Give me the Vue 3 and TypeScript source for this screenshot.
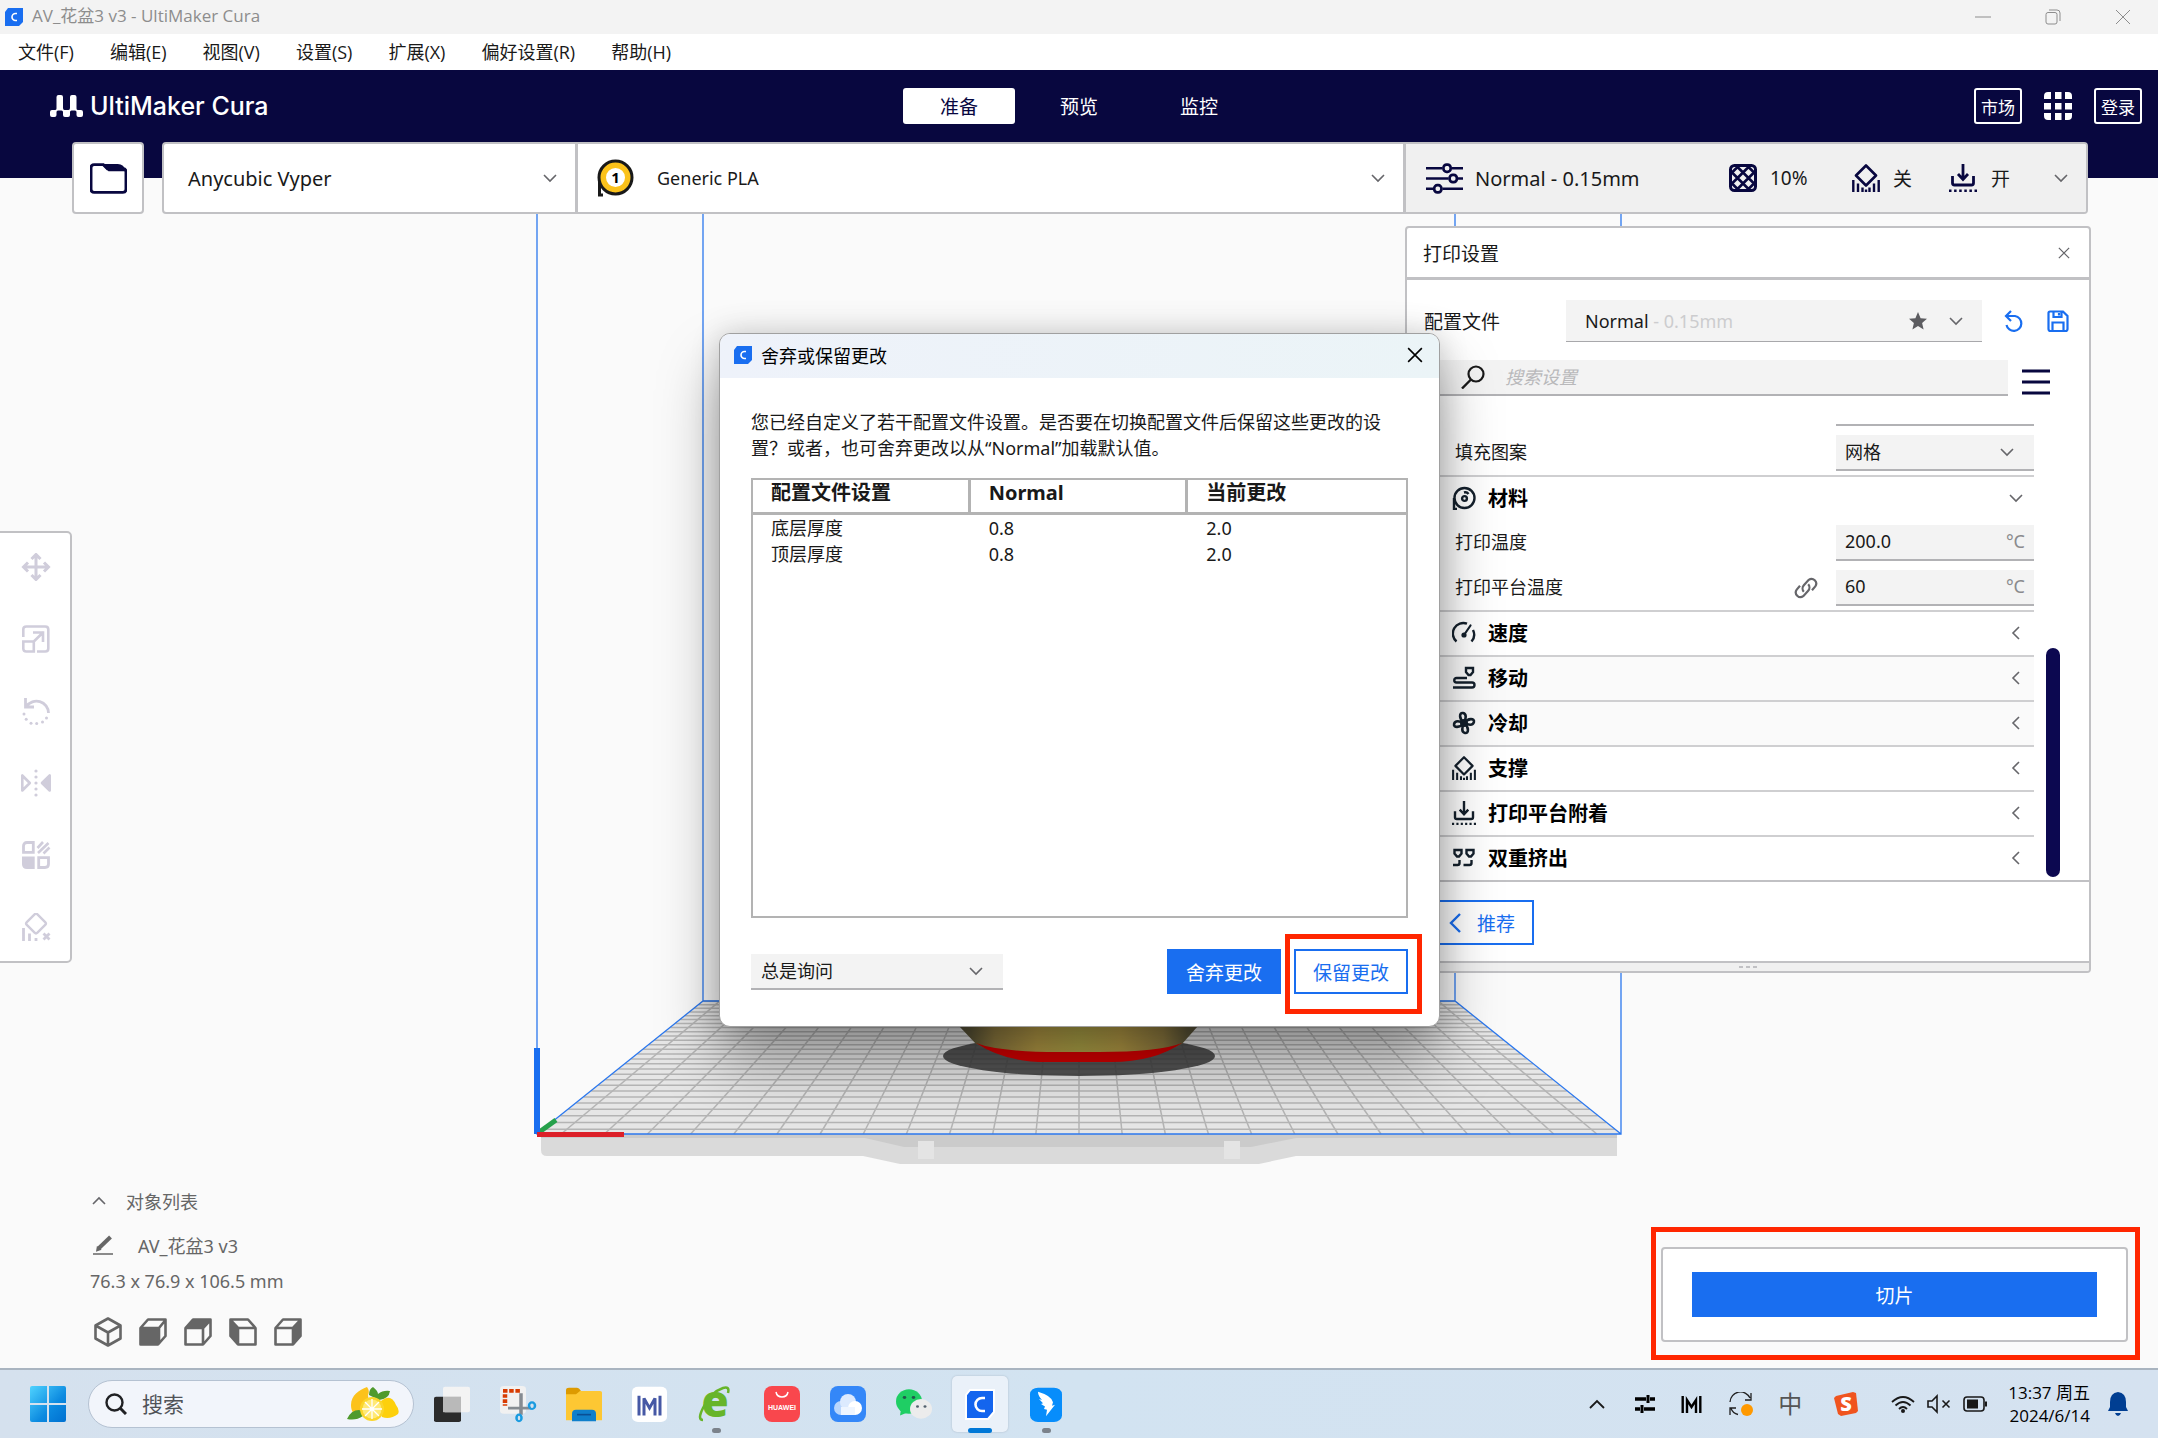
<script setup lang="ts">
import { ref } from 'vue'

interface Category { icon: string; name: string; open?: boolean; muted?: boolean }
interface Change { name: string; before: string; after: string }

const menus: string[] = ['文件(F)', '编辑(E)', '视图(V)', '设置(S)', '扩展(X)', '偏好设置(R)', '帮助(H)']
const stages: string[] = ['准备', '预览', '监控']
const activeStage = ref<string>('准备')
const tools: { icon: string; label: string }[] = [
  { icon: 'move', label: '移动' },
  { icon: 'scale', label: '缩放' },
  { icon: 'rotate', label: '旋转' },
  { icon: 'mirror', label: '镜像' },
  { icon: 'permodel', label: '单一模型设置' },
  { icon: 'blocker', label: '支撑拦截器' },
]
const views: string[] = ['view3d', 'viewfront', 'viewtop', 'viewleft', 'viewright']
const categories: Category[] = [
  { icon: 'speed', name: '速度' },
  { icon: 'travel', name: '移动', muted: true },
  { icon: 'fan', name: '冷却', muted: true },
  { icon: 'support', name: '支撑' },
  { icon: 'adhesion', name: '打印平台附着' },
  { icon: 'dual', name: '双重挤出' },
]
const changes: Change[] = [
  { name: '底层厚度', before: '0.8', after: '2.0' },
  { name: '顶层厚度', before: '0.8', after: '2.0' },
]
const search = ref<string>('')
const nozzleTemp = ref<string>('200.0')
const bedTemp = ref<string>('60')

/* Build plate in one-point perspective: the front edge is at y 1134, the horizon at y 700. */
const centre = 1080
const horizon = 700
const depthAt = (t: number): number => 1 / (1 + 0.4422 * t)
const yAt = (t: number): number => horizon + 434 * depthAt(t)
const depthLines = Array.from({ length: 25 }, (_, i) => {
  const dx = (i - 12) * 43.15
  return { x1: centre + dx, y1: yAt(0), x2: centre + dx * depthAt(1), y2: yAt(1) }
})
const crossLines = Array.from({ length: 27 }, (_, i) => {
  const t = 0.0245 + 0.0374 * i
  const half = 541.5 * depthAt(t)
  return { x1: centre - half, x2: centre + half, y: yAt(t) }
})
</script>

<template>
  <div class="desktop">
    <svg class="sprite" aria-hidden="true">
      <symbol id="cura" viewBox="0 0 18 18">
        <path d="M3 0h15v14l-4 4H0V4z" fill="#196ef0" />
        <path d="M12 5.500h-1.500a3.500 3.500 0 0 0 0 7H12" fill="none" stroke="#fff" stroke-width="1.600" />
      </symbol>
      <symbol id="down" viewBox="0 0 14 14"><path d="M1 4l6 6 6-6" fill="none" stroke="currentColor" stroke-width="1.600" /></symbol>
      <symbol id="left" viewBox="0 0 14 14"><path d="M10 1L4 7l6 6" fill="none" stroke="currentColor" stroke-width="1.600" /></symbol>
      <symbol id="close" viewBox="0 0 14 14"><path d="M1 1l12 12M13 1L1 13" fill="none" stroke="currentColor" stroke-width="1.400" /></symbol>
      <symbol id="support" viewBox="0 0 28 28">
        <path d="M14 1.500l10 10-10 10-10-10z" fill="none" stroke="currentColor" stroke-width="2.600" stroke-linejoin="round" />
        <path d="M1.300 16v12M6 19.500V28M10.500 23.500V28M14 25.500V28M17.500 23.500V28M22 19.500V28M26.700 16v12" stroke="currentColor" stroke-width="2.400" />
      </symbol>
      <symbol id="adhesion" viewBox="0 0 28 28">
        <path d="M14 0v15M9 10l5 5.500 5-5.500M3.500 12v7q0 2 2 2h17q2 0 2-2v-7" fill="none" stroke="currentColor" stroke-width="2.800" />
        <path d="M0 26.700h28" stroke="currentColor" stroke-width="2.500" stroke-dasharray="2.500 2.600" />
      </symbol>
      <symbol id="speed" viewBox="0 0 24 24">
        <path d="M4.500 20.500A10.500 10.500 0 0 1 15 2.700M19.500 20.500a10.500 10.500 0 0 0 1.500-11.500" fill="none" stroke="currentColor" stroke-width="2.400" />
        <path d="M12 14l6.500-9.500" stroke="currentColor" stroke-width="2.200" stroke-linecap="round" /><circle cx="12" cy="14" r="2.600" fill="currentColor" />
      </symbol>
      <symbol id="travel" viewBox="0 0 24 24">
        <path d="M14 2h7v4l-2.500 3h-2L14 6z" fill="none" stroke="currentColor" stroke-width="2.400" />
        <path d="M15 12H4.500a2.200 2.200 0 0 0 0 4.500H20a2.500 2.500 0 0 1 0 5H1" fill="none" stroke="currentColor" stroke-width="2.400" />
      </symbol>
      <symbol id="fan" viewBox="0 0 24 24">
        <g fill="none" stroke="currentColor" stroke-width="2.600" transform="rotate(12 12 12)">
          <path d="M12 12C6 9 5 2.500 9 2.500s4 5 3 9.500z" /><path d="M12 12c3-6 9.500-7 9.500-3s-5 4-9.500 3z" />
          <path d="M12 12c6 3 7 9.500 3 9.500s-4-5-3-9.500z" /><path d="M12 12c-3 6-9.500 7-9.500 3s5-4 9.500-3z" />
        </g>
        <circle cx="12" cy="12" r="4" fill="currentColor" />
      </symbol>
      <symbol id="dual" viewBox="0 0 24 24">
        <g fill="none" stroke="currentColor" stroke-width="2.400">
          <path d="M2.500 4h7v3.500L7 10.500H5L2.500 7.500zM14.500 4h7v3.500L19 10.500h-2l-2.500-3z" />
          <path d="M7.500 14v3q0 2-2 2H1M19.500 14v3q0 2-2 2h-6" />
        </g>
      </symbol>
      <symbol id="spool" viewBox="0 0 24 24">
        <g fill="none" stroke="currentColor" stroke-width="2.400">
          <circle cx="12.500" cy="12" r="10" /><path d="M2 12v11h3" /><circle cx="12.500" cy="12.500" r="2.400" />
          <path d="M12 6.500a4 4 0 0 1 4.500 1.500" />
        </g>
      </symbol>
      <symbol id="move" viewBox="0 0 28 28">
        <path d="M14 2v24M2 14h24M9.500 6L14 1.500 18.500 6M9.500 22l4.500 4.500 4.500-4.500M6 9.500L1.500 14 6 18.500M22 9.500l4.500 4.500-4.500 4.500" fill="none" stroke="currentColor" stroke-width="3" />
      </symbol>
      <symbol id="scale" viewBox="0 0 28 28">
        <path d="M1.300 12V4.500q0-3 3-3h19q3 0 3 3v19q0 3-3 3H15M1.300 16.500h10.500v10H4.300q-3 0-3-3zM11.800 16.500L21.500 7M11 7.500h10V17" fill="none" stroke="currentColor" stroke-width="2.600" />
      </symbol>
      <symbol id="rotate" viewBox="0 0 28 28">
        <path d="M3.500 1v9H12M4.500 9.500a12 12 0 0 1 22 6.500" fill="none" stroke="currentColor" stroke-width="2.800" />
        <g fill="currentColor"><circle cx="2" cy="17" r="1.500" /><circle cx="4.200" cy="22.300" r="1.500" /><circle cx="9" cy="26.200" r="1.500" /><circle cx="14.700" cy="26.500" r="1.500" /><circle cx="20.500" cy="25" r="1.500" /><circle cx="24.500" cy="21" r="1.500" /></g>
      </symbol>
      <symbol id="mirror" viewBox="0 0 30 28">
        <path d="M1.300 6.500v15l7.500-7.500z" fill="none" stroke="currentColor" stroke-width="2.600" stroke-linejoin="round" />
        <path d="M28.700 6.500v15L21 14z" fill="currentColor" stroke="currentColor" stroke-width="2.600" stroke-linejoin="round" />
        <g fill="currentColor"><circle cx="15" cy="2" r="1.600" /><circle cx="15" cy="8" r="1.600" /><circle cx="15" cy="14" r="1.600" /><circle cx="15" cy="20" r="1.600" /><circle cx="15" cy="26" r="1.600" /></g>
      </symbol>
      <symbol id="permodel" viewBox="0 0 28 28">
        <path d="M5 1.500h6.300v9.800H1.500V5q0-3.500 3.500-3.500zM16.700 16.700h9.800V23q0 3.500-3.500 3.500h-6.300z" fill="none" stroke="currentColor" stroke-width="2.800" />
        <path d="M0 15.500h12.700V28H5q-5 0-5-5z" fill="currentColor" />
        <path d="M15.500 7l5.500-6M16 12L26.500 2M21.500 12.500l6-6" stroke="currentColor" stroke-width="2.600" />
      </symbol>
      <symbol id="blocker" viewBox="0 0 28 28">
        <rect x="6.500" y="3" width="15" height="15" rx="2" transform="rotate(45 14 10.500)" fill="none" stroke="currentColor" stroke-width="2.400" />
        <path d="M1.500 15v13M7.500 20.500V28M14 25v3M21.500 20.500l6 6M27.500 20.500l-6 6" stroke="currentColor" stroke-width="2.800" />
      </symbol>
      <symbol id="view3d" viewBox="0 0 28 30"><path d="M14 1.500l12.500 7v13L14 28.500 1.500 21.500v-13zM1.500 8.500l12.500 7 12.500-7M14 15.500v13" fill="none" stroke="currentColor" stroke-width="2.600" stroke-linejoin="round" /></symbol>
      <symbol id="viewfront" viewBox="0 0 28 28"><path d="M1.500 10L9 1.500h17.500V18L19 26.500H1.500zM1.500 10H20v16M20 10l6.500-8" fill="none" stroke="currentColor" stroke-width="2.600" stroke-linejoin="round" /><path d="M1.500 9H20v17.500H1.500z" fill="currentColor" /></symbol>
      <symbol id="viewtop" viewBox="0 0 28 28"><path d="M1.500 10L9 1.500h17.500V18L19 26.500H1.500zM1.500 10H19v16M19 10l7.500-8" fill="none" stroke="currentColor" stroke-width="2.600" stroke-linejoin="round" /><path d="M1.500 10L9 1.500h17.500L19 10z" fill="currentColor" /></symbol>
      <symbol id="viewleft" viewBox="0 0 28 28"><path d="M26.500 10L19 1.500H1.500V18L9 26.500h17.500zM26.500 10H9v16M9 10L1.500 2" fill="none" stroke="currentColor" stroke-width="2.600" stroke-linejoin="round" /><path d="M1.500 1.500L9 10v16.500L1.500 18z" fill="currentColor" /></symbol>
      <symbol id="viewright" viewBox="0 0 28 28"><path d="M1.500 10L9 1.500h17.500V18L19 26.500H1.500zM1.500 10H19v16M19 10l7.500-8" fill="none" stroke="currentColor" stroke-width="2.600" stroke-linejoin="round" /><path d="M26.500 1.500L19 10v16.500L26.500 18z" fill="currentColor" /></symbol>
    </svg>

    <header class="titlebar">
      <svg class="app-icon"><use href="#cura" /></svg>
      <span class="window-title">AV_花盆3 v3 - UltiMaker Cura</span>
      <div class="window-buttons">
        <button type="button" aria-label="最小化"><svg viewBox="0 0 16 16"><path d="M0 8h16" stroke="currentColor" /></svg></button>
        <button type="button" aria-label="还原"><svg viewBox="0 0 16 16"><path d="M4 1h8q3 0 3 3v8M3 3.500h7q2 0 2 2V13q0 2-2 2H3q-2 0-2-2V5.500q0-2 2-2z" fill="none" stroke="currentColor" /></svg></button>
        <button type="button" aria-label="关闭"><svg viewBox="0 0 16 16"><path d="M1 1l14 14M15 1L1 15" stroke="currentColor" /></svg></button>
      </div>
    </header>

    <nav class="menubar"><button v-for="m in menus" :key="m" type="button">{{ m }}</button></nav>

    <div class="mainbar">
      <div class="brand">
        <svg viewBox="0 0 33 22"><path d="M0 17q0-2 2-2h3q1.500 0 1.500-1.500V2q0-2 2-2h2.500q2 0 2 2v11q0 2 1.500 2h4q1.500 0 1.500-2V2q0-2 2-2h2.500q2 0 2 2v11.500q0 1.500 1.500 1.500h3q2 0 2 2v3q0 2-2 2h-2.500q-2 0-2-2v-3q0-1.500-1.500-1.500H21.500q-1.500 0-1.500 1.500v3q0 2-2 2h-3q-2 0-2-2v-3q0-1.500-1.500-1.500H8q-1.500 0-1.500 1.500v3q0 2-2 2H2q-2 0-2-2z" fill="#fff" /></svg>
        <span>UltiMaker Cura</span>
      </div>
      <div class="stages">
        <button v-for="s in stages" :key="s" type="button" :class="{ active: s === activeStage }" @click="activeStage = s">{{ s }}</button>
      </div>
      <div class="account">
        <button type="button">市场</button>
        <svg viewBox="0 0 28 28" class="apps"><g fill="#fff">
          <path d="M0 7V4q0-4 4-4h3v7zM11 0h6.500v7H11zM21 0h3q4 0 4 4v3h-7zM0 11h7v6.500H0zM11 11h6.500v6.500H11zM21 11h7v6.500h-7zM0 21h7v7H4q-4 0-4-4zM11 21h6.500v7H11zM21 21h7v3q0 4-4 4h-3z" />
        </g></svg>
        <button type="button">登录</button>
      </div>
    </div>

    <main class="workspace">
      <div class="scene">
        <svg viewBox="530 178 1100 1000" aria-label="打印平台">
          <defs>
            <linearGradient id="pot"><stop offset="0" stop-color="#3c3c3a" /><stop offset=".14" stop-color="#5d5638" /><stop offset=".22" stop-color="#8f7b40" /><stop offset=".36" stop-color="#b39945" /><stop offset=".5" stop-color="#aea347" /><stop offset=".64" stop-color="#b39945" /><stop offset=".78" stop-color="#8f7b40" /><stop offset=".86" stop-color="#5d5638" /><stop offset="1" stop-color="#3c3c3a" /></linearGradient>
          </defs>
          <path d="M542 1134h1076v22h-321l-37 8H901l-37-8H548q-6 0-6-6z" fill="#dadada" />
          <path d="M542 1134h1076v4h-321l-45 9H905l-39-9H542z" fill="#cbcbcb" />
          <path d="M919 1141h16v18h-16zM1225 1141h16v18h-16z" fill="#e4e4e4" />
          <path d="M538 1134L704 1001H1456L1622 1134z" fill="#e6e6e6" />
          <g stroke="#b4b4b4" stroke-width="1.500">
            <line v-for="(l, i) in depthLines" :key="'d' + i" :x1="l.x1" :y1="l.y1" :x2="l.x2" :y2="l.y2" />
            <line v-for="(l, i) in crossLines" :key="'c' + i" :x1="l.x1" :y1="l.y" :x2="l.x2" :y2="l.y" />
          </g>
          <ellipse cx="1080" cy="1056" rx="136" ry="20" fill="#3c3c3c" opacity=".86" />
          <path d="M930 980H1230L1199 1026L1183 1044Q1160 1056 1115 1058H1045Q1000 1056 977 1044L960 1026z" fill="url(#pot)" />
          <path d="M977 1043Q1000 1052 1060 1052H1100Q1160 1052 1183 1043Q1155 1062 1112 1062H1048Q1005 1062 977 1043z" fill="#d20000" />
          <path d="M538 178V1134H1622V178M538 1134L704 1001H1456L1622 1134M704 1001V178M1456 1001V178" fill="none" stroke="#2c78ee" stroke-width="1.300" />
          <path d="M539 1133l18-13" stroke="#26a14b" stroke-width="5" />
          <path d="M538 1048v86" stroke="#196ef0" stroke-width="6" />
          <path d="M538 1134.500h87" stroke="#dc2028" stroke-width="5" />
        </svg>
      </div>

      <div class="topbar">
        <button type="button" class="open-file" aria-label="打开文件">
          <svg viewBox="0 0 36 30"><path d="M4 1.500h9l4 4h15q3 0 3 3v17q0 3-3 3H4q-3 0-3-3v-21q0-3 3-3z" fill="none" stroke="#08073f" stroke-width="2.800" /><path d="M11 1h16q6 0 8 7H18z" fill="#08073f" /></svg>
        </button>
        <div class="setup">
          <button type="button" class="machine"><span>Anycubic Vyper</span><svg class="chev"><use href="#down" /></svg></button>
          <button type="button" class="material">
            <svg viewBox="0 0 38 38" class="extruder"><path d="M2.500 18v18H6" fill="none" stroke="#191919" stroke-width="3" /><circle cx="18.500" cy="18.500" r="13" fill="#fff" stroke="#fbc21b" stroke-width="7" /><circle cx="18.500" cy="18.500" r="16.500" fill="none" stroke="#191919" stroke-width="3" /><text x="18.500" y="24" text-anchor="middle">1</text></svg>
            <span>Generic PLA</span><svg class="chev"><use href="#down" /></svg>
          </button>
          <button type="button" class="summary">
            <svg viewBox="0 0 36 30" class="sliders"><g fill="none" stroke="currentColor" stroke-width="2.600"><path d="M0 5h16M25 5h11M0 15h22M31 15h5M0 25h7M16 25h20" /><rect x="17" y="1.500" width="7" height="7" rx="3" /><rect x="23" y="11.500" width="7" height="7" rx="3" /><rect x="8" y="21.500" width="7" height="7" rx="3" /></g></svg>
            <span class="grow profile-name">Normal - 0.15mm</span>
            <svg viewBox="0 0 28 28" class="i28"><rect x="1.500" y="1.500" width="25" height="25" rx="4" fill="none" stroke="currentColor" stroke-width="3" /><path d="M2 9.500L9.500 2M2 20.500L20.500 2M7.500 26L26 7.500M18.500 26l7.500-7.500M18.500 2l7.500 7.500M7.500 2L26 20.500M2 7.500L20.500 26M2 18.500L9.500 26" stroke="currentColor" stroke-width="2.600" /></svg>
            <span class="v10">10%</span>
            <svg class="i28"><use href="#support" /></svg><span class="v1">关</span>
            <svg class="i28"><use href="#adhesion" /></svg><span class="v2">开</span>
            <svg class="chev"><use href="#down" /></svg>
          </button>
        </div>
      </div>

      <div class="toolbar">
        <button v-for="t in tools" :key="t.icon" type="button" :aria-label="t.label"><svg><use :href="'#' + t.icon" /></svg></button>
      </div>

      <section class="objects">
        <button type="button" class="obj-toggle"><svg class="chev up"><use href="#down" /></svg>对象列表</button>
        <div class="obj-name"><svg viewBox="0 0 20 20"><path d="M5.500 13.500L17.500 2" stroke="currentColor" stroke-width="4" /><path d="M4 15.500l.5-3 2.500 2zM0 19h20" fill="currentColor" stroke="currentColor" stroke-width="1.600" /></svg>AV_花盆3 v3</div>
        <div class="obj-size">76.3 x 76.9 x 106.5 mm</div>
        <div class="views"><button v-for="v in views" :key="v" type="button" :aria-label="v"><svg><use :href="'#' + v" /></svg></button></div>
      </section>

      <section class="panel">
        <header class="panel-head"><h2>打印设置</h2><button type="button" aria-label="关闭"><svg><use href="#close" /></svg></button></header>
        <div class="profile">
          <span class="plabel">配置文件</span>
          <button type="button" class="profile-box"><span class="grow">Normal<em> - 0.15mm</em></span>
            <svg class="star" viewBox="0 0 18 18"><path d="M9 0l2.600 6.200 6.400.5-4.900 4.300 1.500 6.500L9 14l-5.600 3.500 1.500-6.500L0 6.700l6.400-.5z" fill="#5c5c60" /></svg>
            <svg class="chev"><use href="#down" /></svg></button>
          <button type="button" aria-label="重置"><svg viewBox="0 0 24 24"><path d="M9 2L4 7l5 5M4.500 7H13a7.500 7.500 0 1 1-8.500 9" fill="none" stroke="#196ef0" stroke-width="2.200" /></svg></button>
          <button type="button" aria-label="保存"><svg viewBox="0 0 24 24"><path d="M4 2.500h13l4.500 4.500V20q0 2-2 2h-15q-2 0-2-2V4q0-1.500 1.500-1.500zM7.500 3v5h8V3M6.500 22v-8.500h11V22M13 4v2.500" fill="none" stroke="#196ef0" stroke-width="2.200" /></svg></button>
        </div>
        <div class="finder">
          <label class="search"><svg viewBox="0 0 24 24"><circle cx="15" cy="9" r="7.500" fill="none" stroke="#191919" stroke-width="2.200" /><path d="M10 14.500l-9 9" stroke="#191919" stroke-width="2.400" /></svg><input v-model="search" type="text" placeholder="搜索设置" aria-label="搜索设置" /></label>
          <button type="button" aria-label="可见性"><svg viewBox="0 0 28 26"><path d="M0 2h28M0 13h28M0 24h28" stroke="#08073f" stroke-width="2.800" /></svg></button>
        </div>
        <div class="settings">
          <div class="rows">
            <div class="edge"></div>
            <div class="row">
              <label for="pattern">填充图案</label>
              <div class="field select"><select id="pattern"><option>网格</option></select><svg class="chev"><use href="#down" /></svg></div>
            </div>
            <button type="button" class="cat"><svg class="cicon"><use href="#spool" /></svg><span>材料</span><svg class="chev"><use href="#down" /></svg></button>
            <div class="row">
              <label for="nozzle">打印温度</label>
              <div class="field"><input id="nozzle" v-model="nozzleTemp" type="text" /><span>°C</span></div>
            </div>
            <div class="row">
              <label for="bed">打印平台温度</label>
              <svg class="link" viewBox="0 0 22 22"><g fill="none" stroke="#66666a" stroke-width="2"><path d="M9 14.500a4.500 4.500 0 0 1 0-6l4.500-5a4.300 4.300 0 0 1 6 6l-3 3.500" /><path d="M13 7.500a4.500 4.500 0 0 1 0 6l-4.500 5a4.300 4.300 0 0 1-6-6l3-3.500" /></g></svg>
              <div class="field"><input id="bed" v-model="bedTemp" type="text" /><span>°C</span></div>
            </div>
            <button v-for="c in categories" :key="c.name" type="button" class="cat" :class="{ muted: c.muted }">
              <svg class="cicon"><use :href="'#' + c.icon" /></svg><span>{{ c.name }}</span><svg class="chev"><use href="#left" /></svg>
            </button>
          </div>
          <div class="track"><div class="thumb"></div></div>
        </div>
        <div class="panel-foot"><button type="button"><svg viewBox="0 0 14 20"><path d="M12 1L3 10l9 9" fill="none" stroke="currentColor" stroke-width="2.400" /></svg>推荐</button></div>
        <div class="grip"><i></i><i></i><i></i></div>
      </section>

      <div class="slice-card"><button type="button">切片</button><div class="mark"></div></div>
    </main>

    <section class="dialog" role="dialog" aria-labelledby="dlg-title">
      <header><svg class="app-icon"><use href="#cura" /></svg><h2 id="dlg-title">舍弃或保留更改</h2><button type="button" aria-label="关闭"><svg><use href="#close" /></svg></button></header>
      <div class="dialog-body">
        <p>您已经自定义了若干配置文件设置。是否要在切换配置文件后保留这些更改的设置？或者，也可舍弃更改以从“Normal”加载默认值。</p>
        <div class="table-box">
          <table>
            <thead><tr><th>配置文件设置</th><th>Normal</th><th>当前更改</th></tr></thead>
            <tbody><tr v-for="c in changes" :key="c.name"><td>{{ c.name }}</td><td>{{ c.before }}</td><td>{{ c.after }}</td></tr></tbody>
          </table>
        </div>
        <div class="dialog-foot">
          <div class="field select ask"><select aria-label="切换时的操作"><option>总是询问</option></select><svg class="chev"><use href="#down" /></svg></div>
          <button type="button" class="primary">舍弃更改</button>
          <div class="keep"><button type="button" class="secondary">保留更改</button><div class="mark"></div></div>
        </div>
      </div>
    </section>

    <footer class="taskbar">
      <button type="button" class="start" aria-label="开始"><svg viewBox="0 0 36 36"><defs><linearGradient id="win" x2="1" y2="1"><stop offset="0" stop-color="#4fd3ff" /><stop offset=".6" stop-color="#0c8ae0" /><stop offset="1" stop-color="#0070d0" /></linearGradient></defs><path d="M2 0h15v17H0V2q0-2 2-2zM19 0h15q2 0 2 2v15H19zM0 19h17v17H2q-2 0-2-2zM19 19h17v15q0 2-2 2H19z" fill="url(#win)" /></svg></button>
      <label class="task-search">
        <svg viewBox="0 0 22 22"><circle cx="9.500" cy="9.500" r="8" fill="none" stroke="#202124" stroke-width="2.400" /><path d="M15.500 15.500l5.500 5.500" stroke="#202124" stroke-width="3" /></svg>
        <input type="text" placeholder="搜索" aria-label="搜索" />
        <svg class="lemon" viewBox="0 0 52 34">
          <path d="M4 18C4 8 12 3 20 0q3 4 1 8c2 12-4 20-10 22-4-2-7-6-7-12z" fill="#fcc21b" /><path d="M34 14q10-8 15 4 4 5 2 9-8 6-16 3z" fill="#fdd00c" />
          <path d="M22 8q0-6 4-8 5 4 5 7 5-4 12-3-1 8-11 9zM0 32q4-9 12-9 4 1 4 6-7 5-16 3z" fill="#4f9a2d" />
          <circle cx="25" cy="22" r="12" fill="#fbd62c" /><circle cx="25" cy="22" r="9.500" fill="#ffe976" /><path d="M25 12v20M15 22h20M18 15l14 14M32 15L18 29" stroke="#fff" stroke-width="1.300" />
        </svg>
      </label>
      <div class="apps-row">
        <button type="button" aria-label="任务视图"><svg viewBox="0 0 36 44" preserveAspectRatio="none"><rect x="0" y="13" width="27" height="31" rx="2" fill="#2b2b2b" /><rect x="9" y="1" width="27" height="31" rx="2" fill="#f3f3f3" /><path d="M9 13h18v19H9z" fill="#b9b9b9" /></svg></button>
        <button type="button" aria-label="截图"><svg viewBox="0 0 36 44" preserveAspectRatio="none"><rect x="0" y="0" width="26" height="34" rx="4" fill="#f1f1f1" /><path d="M3 6h17M5 10v14" fill="none" stroke="#d83b01" stroke-width="4.500" stroke-dasharray="4.500 1.700" /><path d="M21 9v18h10M8 27h13v8" fill="none" stroke="#858b91" stroke-width="3.500" /><ellipse cx="32" cy="24" rx="3" ry="4" fill="none" stroke="#1a9be0" stroke-width="2.500" /><ellipse cx="19" cy="39" rx="2.500" ry="4" fill="none" stroke="#1a9be0" stroke-width="2.500" /></svg></button>
        <button type="button" aria-label="文件资源管理器"><svg viewBox="0 0 36 44" preserveAspectRatio="none"><path d="M0 5q0-3 3-3h8q2 0 4 4l-2 6H0z" fill="#dd9a00" /><path d="M0 10h10l4-4h20q2 0 2 2v34H0z" fill="#fdc733" /><path d="M6 43V34q0-5 4-5h16q4 0 4 5v9z" fill="#0f7fcb" /><path d="M11 35h14" stroke="#0a4f94" stroke-width="2" /></svg></button>
        <button type="button" aria-label="电脑管家"><svg viewBox="0 0 36 44" preserveAspectRatio="none"><rect x="0" y="1" width="35" height="43" rx="6" fill="#fff" /><path d="M7 12v24M28 12v24M12 36V15l5.500 12L23 15v21" fill="none" stroke="#4658a5" stroke-width="3" /></svg></button>
        <button type="button" aria-label="浏览器" class="running"><svg viewBox="0 0 36 36"><text x="17" y="31" text-anchor="middle" class="ie">e</text><path d="M5 34q-6 0 0-12Q13 6 25 2q7-2 5 5" fill="none" stroke="#67b52a" stroke-width="2.500" /></svg></button>
        <button type="button" aria-label="华为应用市场"><svg viewBox="0 0 36 36"><rect x="0" y="0" width="36" height="36" rx="8" fill="#f9474d" /><path d="M12 6q1 5 6 5t6-5" fill="none" stroke="#fff" stroke-width="1.500" /><text x="18" y="24" text-anchor="middle" class="hw">HUAWEI</text></svg></button>
        <button type="button" aria-label="云空间"><svg viewBox="0 0 36 36"><rect x="0" y="0" width="36" height="36" rx="8" fill="#3487f8" /><circle cx="11" cy="22" r="7" fill="#b9d6fd" /><circle cx="18" cy="16" r="8" fill="#dceafe" /><circle cx="25" cy="22" r="7" fill="#fff" /><path d="M11 21h14v8H11z" fill="#eef5ff" /></svg></button>
        <button type="button" aria-label="微信"><svg viewBox="0 0 36 44" preserveAspectRatio="none"><ellipse cx="13" cy="19" rx="13" ry="15" fill="#1fce64" /><path d="M5 28l-1 8 8-4z" fill="#1fce64" /><ellipse cx="25" cy="28" rx="11" ry="12" fill="#ececec" /><g fill="#234" opacity=".75"><circle cx="8.500" cy="14" r="1.800" /><circle cx="17.500" cy="14" r="1.800" /><circle cx="21.500" cy="25" r="1.500" /><circle cx="29" cy="25" r="1.500" /></g></svg></button>
        <button type="button" aria-label="UltiMaker Cura" class="current"><svg viewBox="0 0 36 36"><path d="M8 4h24v22l-6 7H4V9z" fill="#1465ee" stroke="#fff" stroke-width="2" /><path d="M23 12h-3a6.500 6.500 0 0 0 0 13h3" fill="none" stroke="#fff" stroke-width="2.600" /></svg></button>
        <button type="button" aria-label="钉钉" class="running"><svg viewBox="0 0 36 44" preserveAspectRatio="none"><rect x="2" y="2" width="32" height="42" rx="8" fill="#078dfb" /><path d="M10 7q14 5 15 13l-1 4 3-1-9 14 1-8-3-1 1-3-4-3 2-1-4-5 3 1q-4-5-4-10z" fill="#fff" /></svg></button>
      </div>
      <div class="tray">
        <svg class="t-chev" viewBox="0 0 16 16"><path d="M1 12l7-7 7 7" fill="none" stroke="currentColor" stroke-width="1.800" /></svg>
        <svg class="t-eq" viewBox="0 0 20 20"><path d="M0 5h11M15 5h5M0 15h5M9 15h11" stroke="#000" stroke-width="3.600" /><path d="M13 1v8M7 11v8" stroke="#000" stroke-width="3" /></svg>
        <svg class="t-m" viewBox="0 0 20 20"><path d="M1.200 2v17M18.800 2v17M5.500 19V6l4.500 7 4.500-7v13" fill="none" stroke="#000" stroke-width="2.400" /></svg>
        <svg class="t-sync" viewBox="0 0 24 24"><path d="M1 10a10.500 10.500 0 0 1 20-4M22 1v7h-6M9 22.500a10 10 0 0 1-7-6M1 23v-7h6" fill="none" stroke="#202020" stroke-width="1.300" /><circle cx="18" cy="18" r="6" fill="#f90" /></svg>
        <span class="t-ime">中</span>
        <svg class="t-s" viewBox="0 0 24 24"><path d="M2 4l17-4 3 1 2 18-2 2-15 3-3-2L0 6z" fill="#f0541e" /><text x="12" y="19" text-anchor="middle">S</text></svg>
        <div class="t-sys">
          <svg viewBox="0 0 24 24"><path d="M1 10q11-10 22 0M4.500 13.500q7.500-7 15 0M8 17q4-4 8 0" fill="none" stroke="currentColor" stroke-width="1.800" /><circle cx="12" cy="19" r="2" fill="currentColor" /></svg>
          <svg viewBox="0 0 24 24"><path d="M1 9h4l5-5v16l-5-5H1zM15.500 8.500l7 7M22.500 8.500l-7 7" fill="none" stroke="currentColor" stroke-width="1.600" /></svg>
          <svg viewBox="0 0 24 24"><rect x="1" y="5" width="20" height="14" rx="3" fill="none" stroke="currentColor" stroke-width="1.600" /><path d="M4 7.500h11v9H4zM22 9.500h2v5h-2z" fill="currentColor" /></svg>
        </div>
        <div class="clock"><span>13:37 周五</span><span>2024/6/14</span></div>
        <svg class="t-bell" viewBox="0 0 20 24"><path d="M10 0q8 1 8 10v5l2 4H0l2-4v-5Q2 1 10 0zM7 21h6q-1 3-3 3t-3-3z" fill="#003e92" /></svg>
      </div>
    </footer>
  </div>
</template>

<style>
body { margin: 0; }
</style>

<style scoped>
.desktop {
  --navy: #08073f;
  --line: #c1c1c4;
  --blue: #196ef0;
  position: relative;
  display: flex;
  flex-direction: column;
  min-height: 100vh;
  overflow: hidden;
  background: #fafafa;
  color: #191919;
  font-family: "Noto Sans", "Noto Sans CJK SC", sans-serif;
  font-size: 18px;
}
.desktop * { box-sizing: border-box; }
button, input, select { font: inherit; color: inherit; padding: 0; margin: 0; border: 0; background: none; }
h2, p { margin: 0; font-weight: 400; }
svg { display: block; flex: none; }
.sprite { position: absolute; width: 0; height: 0; }
.chev { width: 14px; height: 14px; color: #66666a; }
.chev.up { transform: rotate(180deg); }
.grow { flex: 1; text-align: left; }
.app-icon { width: 18px; height: 18px; }

.titlebar { display: flex; align-items: center; height: 34px; padding-left: 5px; background: #f3f3f3; color: #8d8d8d; }
.window-title { flex: 1; padding: 0 0 2px 9px; font-family: "Open Sans", "Noto Sans CJK SC", sans-serif; font-size: 17px; line-height: 24px; }
.window-buttons { display: flex; }
.window-buttons button { display: flex; justify-content: center; width: 70px; }
.window-buttons svg { width: 16px; height: 16px; }
.menubar { display: flex; gap: 36px; align-items: center; height: 36px; padding: 0 0 2px 18px; background: #fff; font-family: "Open Sans", "Noto Sans CJK SC", sans-serif; font-size: 18px; }

.mainbar { display: grid; grid-template-columns: 1fr auto 1fr; height: 108px; padding-top: 18px; background: var(--navy); color: #fff; font-size: 19px; }
.brand { display: flex; gap: 7px; align-items: center; height: 36px; padding-left: 50px; font-family: Inter, sans-serif; font-size: 25px; font-weight: 500; }
.brand svg { width: 33px; height: 22px; }
.stages { display: flex; gap: 8px; }
.stages button { width: 112px; height: 36px; border-radius: 3px; }
.stages .active { background: #fff; color: var(--navy); }
.account { display: flex; gap: 22px; justify-content: flex-end; align-items: center; height: 36px; padding-right: 16px; }
.account button { width: 48px; height: 36px; border: 2px solid #fff; border-radius: 3px; font-size: 17px; }
.apps { width: 28px; height: 28px; }

.workspace { position: relative; flex: 1; }
.scene { position: absolute; inset: 0; display: flex; justify-content: center; overflow: hidden; }
.scene svg { width: 1100px; height: 1000px; }
.topbar { position: relative; display: flex; gap: 18px; margin-top: -36px; padding: 0 70px 0 72px; font-size: 19px; }
.open-file { display: flex; align-items: center; justify-content: center; width: 72px; height: 72px; border: 2px solid var(--line); border-radius: 4px; background: #fff; }
.open-file svg { width: 37px; height: 31px; }
.setup { display: flex; flex: 1; height: 72px; border: 2px solid var(--line); border-radius: 4px; background: #fff; overflow: hidden; }
.setup button { display: flex; align-items: center; }
.machine { width: 414px; padding: 0 18px 0 24px; justify-content: space-between; border-right: 3px solid var(--line) !important; font-size: 20px; }
.material { flex: 1; padding: 0 18px 0 19px; border-right: 3px solid var(--line) !important; }
.material span { flex: 1; padding-left: 22px; text-align: left; font-size: 18px; }
.extruder { width: 38px; height: 38px; }
.extruder text { font-size: 15px; font-weight: 700; }
.summary { width: 680px; padding: 0 18px 0 20px; background: #f0f0f0 !important; color: var(--navy); }
.summary span { color: #191919; }
.profile-name { font-size: 20px; }
.sliders { width: 37px; height: 31px; margin-right: 12px; }
.i28 { width: 28px; height: 28px; }
.v10 { width: 95px; padding-left: 13px; text-align: left; }
.v1 { width: 69px; padding-left: 13px; text-align: left; }
.v2 { width: 77px; padding-left: 14px; text-align: left; }

.toolbar { position: absolute; top: 353px; left: -2px; width: 74px; outline: 2px solid var(--line); outline-offset: -2px; border-radius: 0 5px 5px 0; background: #fff; color: #d0cddb; }
.toolbar button { display: flex; align-items: center; justify-content: center; width: 76px; height: 72px; }
.toolbar svg { width: 30px; height: 28px; }

.objects { position: absolute; left: 90px; bottom: 20px; color: #666; }
.obj-toggle { display: flex; gap: 20px; align-items: center; height: 44px; padding: 0 0 2px 2px; }
.obj-name { display: flex; gap: 25px; align-items: center; height: 44px; padding: 0 0 2px 3px; }
.obj-name svg { width: 20px; height: 20px; }
.obj-size { height: 26px; line-height: 26px; }
.views { display: flex; gap: 17px; margin-top: 22px; padding-left: 4px; }
.views svg { width: 28px; height: 32px; }

.panel { position: absolute; top: 48px; right: 67px; width: 686px; border: 2px solid var(--line); border-radius: 4px; background: #fff; overflow: hidden; }
.panel-head { display: flex; align-items: center; justify-content: space-between; height: 52px; padding: 0 19px 0 16px; border-bottom: 3px solid var(--line); }
.panel-head h2 { font-size: 19px; }
.panel-head svg { width: 12px; height: 12px; color: #66666a; }
.profile { display: flex; align-items: center; padding: 20px 19px 0 17px; font-size: 19px; }
.plabel { width: 142px; }
.profile-box { display: flex; flex: 1; align-items: center; height: 42px; padding: 0 19px; border-bottom: 1px solid #a8a8ab; background: #f3f3f3; font-size: 18px; }
.profile-box em { color: #ccccce; font-style: normal; }
.profile-box .star { width: 18px; height: 18px; margin-right: 22px; }
.profile > button:not(.profile-box) { margin-left: 20px; }
.profile > button:not(.profile-box) svg { width: 24px; height: 24px; }
.finder { display: flex; gap: 14px; align-items: center; margin-top: 18px; padding: 0 39px 0 18px; }
.search { display: flex; flex: 1; align-items: center; height: 36px; padding-left: 36px; border-bottom: 2px solid #b2b2b5; background: #f3f3f3; }
.search svg { width: 24px; height: 24px; }
.search input { flex: 1; padding-left: 20px; outline: 0; font-style: italic; }
.search input::placeholder { color: #b9b9bb; opacity: 1; }
.finder > button svg { width: 28px; height: 26px; margin-top: 8px; }
.settings { display: flex; margin-top: 28px; padding-right: 29px; }
.rows { flex: 1; padding-left: 18px; }
.edge { width: 198px; height: 2px; margin: 0 0 4px auto; background: #b2b2b5; }
.row { display: flex; align-items: center; height: 45px; padding-left: 30px; }
.row label { flex: 1; padding-bottom: 3px; }
.link { width: 24px; height: 24px; margin-right: 18px; }
.field { display: flex; align-items: center; width: 198px; height: 36px; border-bottom: 2px solid #b2b2b5; background: #f3f3f3; }
.field input { flex: 1; min-width: 0; padding: 0 0 2px 9px; outline: 0; }
.field span { padding: 0 9px 2px 0; color: #8a8a8d; }
.select { position: relative; }
.select select { width: 100%; height: 100%; padding-left: 9px; appearance: none; outline: 0; }
.select .chev { position: absolute; top: 10px; right: 20px; pointer-events: none; }
.cat { display: flex; align-items: center; width: 100%; height: 45px; padding: 0 11px 2px 27px; border-top: 2px solid #cfcfd1; background: #fff; color: #14202c; font-size: 20px; font-weight: 700; }
.cat.muted { background: #fafafa; }
.cat span { flex: 1; padding-left: 12px; text-align: left; color: #000; }
.cicon { width: 24px; height: 24px; }
.track { display: flex; align-items: flex-end; padding: 0 0 3px 12px; }
.thumb { width: 14px; height: 229px; border-radius: 7px; background: #0c0850; }
.panel-foot { padding: 18px; border-top: 2px solid var(--line); height: 81px; }
.panel-foot button { display: flex; gap: 15px; align-items: center; width: 109px; height: 45px; padding-left: 21px; border: 2px solid var(--blue); color: var(--blue); font-size: 19px; }
.panel-foot svg { width: 14px; height: 20px; }
.grip { display: flex; gap: 3px; align-items: center; justify-content: center; height: 10px; border-top: 2px solid var(--line); background: #f0f0f0; }
.grip i { width: 4px; height: 2px; background: #c1c1c4; }

.slice-card { position: absolute; right: 30px; bottom: 26px; width: 467px; padding: 23px 29px; border: 2px solid var(--line); border-radius: 4px; background: #fff; }
.slice-card button { display: block; width: 100%; height: 45px; background: var(--blue); color: #fff; font-size: 19px; }
.mark { position: absolute; border: 5px solid #ff2600; pointer-events: none; }
.slice-card .mark { inset: -22px -14px -20px -12px; }

.dialog { position: absolute; top: 333px; left: calc(50% - 360px); width: 721px; border: 1px solid #a0a0a0; border-radius: 11px; background: #fff; box-shadow: 0 34px 60px rgba(0, 0, 0, 0.36), 0 0 30px rgba(0, 0, 0, 0.16); }
.dialog > header { display: flex; align-items: center; height: 44px; padding: 0 16px 2px 14px; border-radius: 10px 10px 0 0; background: linear-gradient(90deg, #eef2fa, #ebf4f7); color: #000; }
.dialog h2 { flex: 1; padding-left: 9px; font-size: 18px; }
.dialog > header button svg { width: 16px; height: 16px; }
.dialog-body { padding: 31px 31px 32px; }
.dialog-body p { padding-right: 20px; line-height: 26px; }
.table-box { height: 440px; margin-top: 17px; border: 2px solid #b3b3b3; }
table { width: 100%; border-collapse: separate; border-spacing: 0; table-layout: fixed; line-height: 26px; text-align: left; }
th { height: 35px; padding: 0 0 6px 18px; border-right: 3px solid #b3b3b3; border-bottom: 3px solid #b3b3b3; font-size: 20px; line-height: 26px; }
th:last-child { border-right: 0; }
td { height: 26px; padding: 0 0 0 18px; }
.dialog-foot { display: flex; gap: 13px; align-items: center; margin-top: 31px; }
.ask { width: 252px; margin-right: auto; }
.ask select { padding-left: 10px; }
.dialog-foot button { width: 114px; height: 45px; border: 2px solid var(--blue); font-size: 19px; }
.primary { background: var(--blue); color: #fff; }
.secondary { background: #fff; color: var(--blue); }
.keep { position: relative; }
.keep .mark { inset: -15px -14px -20px -9px; }

.taskbar { position: relative; display: flex; align-items: center; height: 70px; padding: 0 30px; border-top: 2px solid #a9b4c0; background: linear-gradient(90deg, #d5e1ee, #d2e3f1 50%, #d5e2f0); }
.start svg { width: 36px; height: 36px; }
.task-search { display: flex; align-items: center; width: 326px; height: 48px; margin-left: 22px; padding: 0 14px 0 16px; border: 1px solid #b5c2d2; border-radius: 24px; background: #f2f5fb; }
.task-search svg { width: 22px; height: 22px; }
.task-search input { flex: 1; min-width: 0; padding-left: 15px; outline: 0; font-size: 21px; }
.task-search input::placeholder { color: #505358; opacity: 1; }
.task-search .lemon { width: 52px; height: 34px; }
.apps-row { display: flex; gap: 10px; margin-left: 10px; }
.apps-row button { position: relative; display: flex; align-items: center; justify-content: center; width: 56px; height: 56px; border-radius: 5px; }
.apps-row svg { width: 36px; height: 36px; overflow: visible; }
.apps-row .current { background: #eaf1f9; box-shadow: 0 0 2px #a8b6c6; }
.running::after, .current::after { content: ""; position: absolute; bottom: -1px; width: 9px; height: 5px; border-radius: 3px; background: #7b828b; }
.current::after { width: 24px; background: #0078d7; }
.ie { fill: #67b52a; font: 800 44px "Open Sans", sans-serif; }
.hw { fill: #fff; font: 700 7px "Liberation Sans", sans-serif; }
.tray { display: flex; flex: 1; align-items: center; justify-content: flex-end; }
.t-chev { width: 16px; height: 16px; margin-right: 30px; }
.t-eq { width: 20px; height: 20px; margin-right: 26px; }
.t-m { width: 21px; height: 20px; margin-right: 27px; }
.t-sync { width: 24px; height: 24px; margin-right: 25px; }
.t-ime { width: 24px; margin-right: 32px; color: #555; font-size: 24px; line-height: 28px; }
.t-s { width: 24px; height: 24px; margin-right: 33px; overflow: visible; }
.t-s text { fill: #fff; font: 800 20px "Open Sans", sans-serif; }
.t-sys { display: flex; gap: 12px; margin-right: 21px; }
.t-sys svg { width: 24px; height: 24px; }
.clock { display: flex; flex-direction: column; align-items: flex-end; color: #000; font-family: "Open Sans", "Noto Sans CJK SC", sans-serif; font-size: 17px; line-height: 23px; }
.t-bell { width: 20px; height: 24px; margin-left: 18px; }
</style>
